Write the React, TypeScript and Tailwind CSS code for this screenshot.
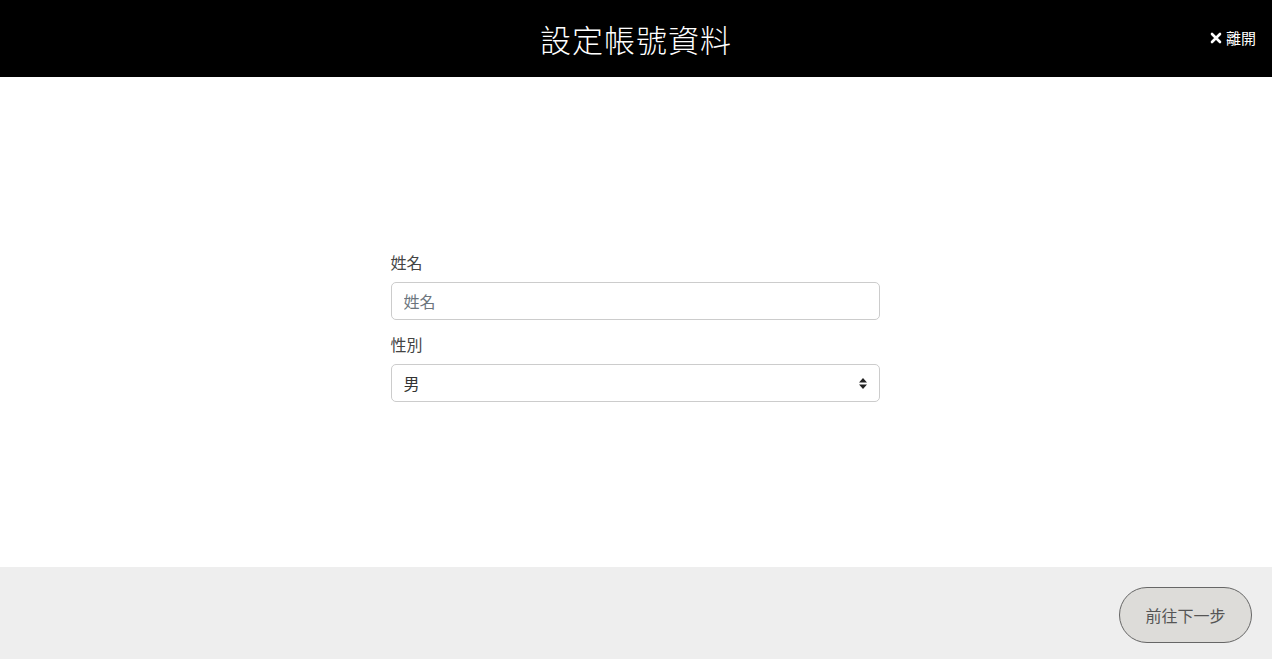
import { useState } from 'react'

export default function App() {
  const [name, setName] = useState('')
  const [gender, setGender] = useState('男')

  return (
    <div
      className="flex h-[659px] w-full flex-col bg-white"
      style={{ fontFamily: '"Noto Sans CJK TC", "Noto Sans", sans-serif' }}
    >
      <header className="relative flex h-[77px] shrink-0 items-center justify-center bg-black">
        <h1 className="text-[31px] font-light leading-none tracking-[1px] text-white">
          設定帳號資料
        </h1>
        <button className="absolute right-[16px] top-[30px] flex items-center gap-[4px] text-[15px] leading-none text-white">
          <svg width="12" height="12" viewBox="0 0 12 12">
            <path
              d="M2 2 L10 10 M10 2 L2 10"
              stroke="white"
              strokeWidth="2.6"
              strokeLinecap="round"
            />
          </svg>
          離開
        </button>
      </header>

      <main className="flex flex-1 items-center justify-center pr-[2px] pt-[8px]">
        <div className="w-[489px] text-[16px] text-[#444]">
          <label className="mb-[8px] block leading-[24px]">姓名</label>
          <input
            value={name}
            onChange={(e) => setName(e.target.value)}
            placeholder="姓名"
            className="block h-[38px] w-full rounded-[5px] border border-[#cccccc] px-[12px] text-[16px] text-[#495057] outline-none placeholder:text-[#6c757d]"
          />
          <label className="mb-[8px] mt-[12px] block leading-[24px]">性別</label>
          <div className="relative">
            <select
              value={gender}
              onChange={(e) => setGender(e.target.value)}
              className="block h-[38px] w-full appearance-none rounded-[5px] border border-[#cccccc] bg-white px-[12px] text-[16px] text-[#333] outline-none"
            >
              <option>男</option>
              <option>女</option>
            </select>
            <svg
              className="pointer-events-none absolute right-[13px] top-[14px]"
              width="8"
              height="11"
              viewBox="0 0 8 11"
            >
              <path d="M4 0 L8 4.5 L0 4.5 Z M0 6.5 L8 6.5 L4 11 Z" fill="#222" />
            </svg>
          </div>
        </div>
      </main>

      <footer className="flex h-[92px] shrink-0 items-center justify-end bg-[#eeeeee] pr-[20px] pt-[4px]">
        <button className="h-[56px] w-[133px] rounded-full border-[1.5px] border-[#666] bg-[#dddcd9] text-[16px] text-[#555]">
          前往下一步
        </button>
      </footer>
    </div>
  )
}
